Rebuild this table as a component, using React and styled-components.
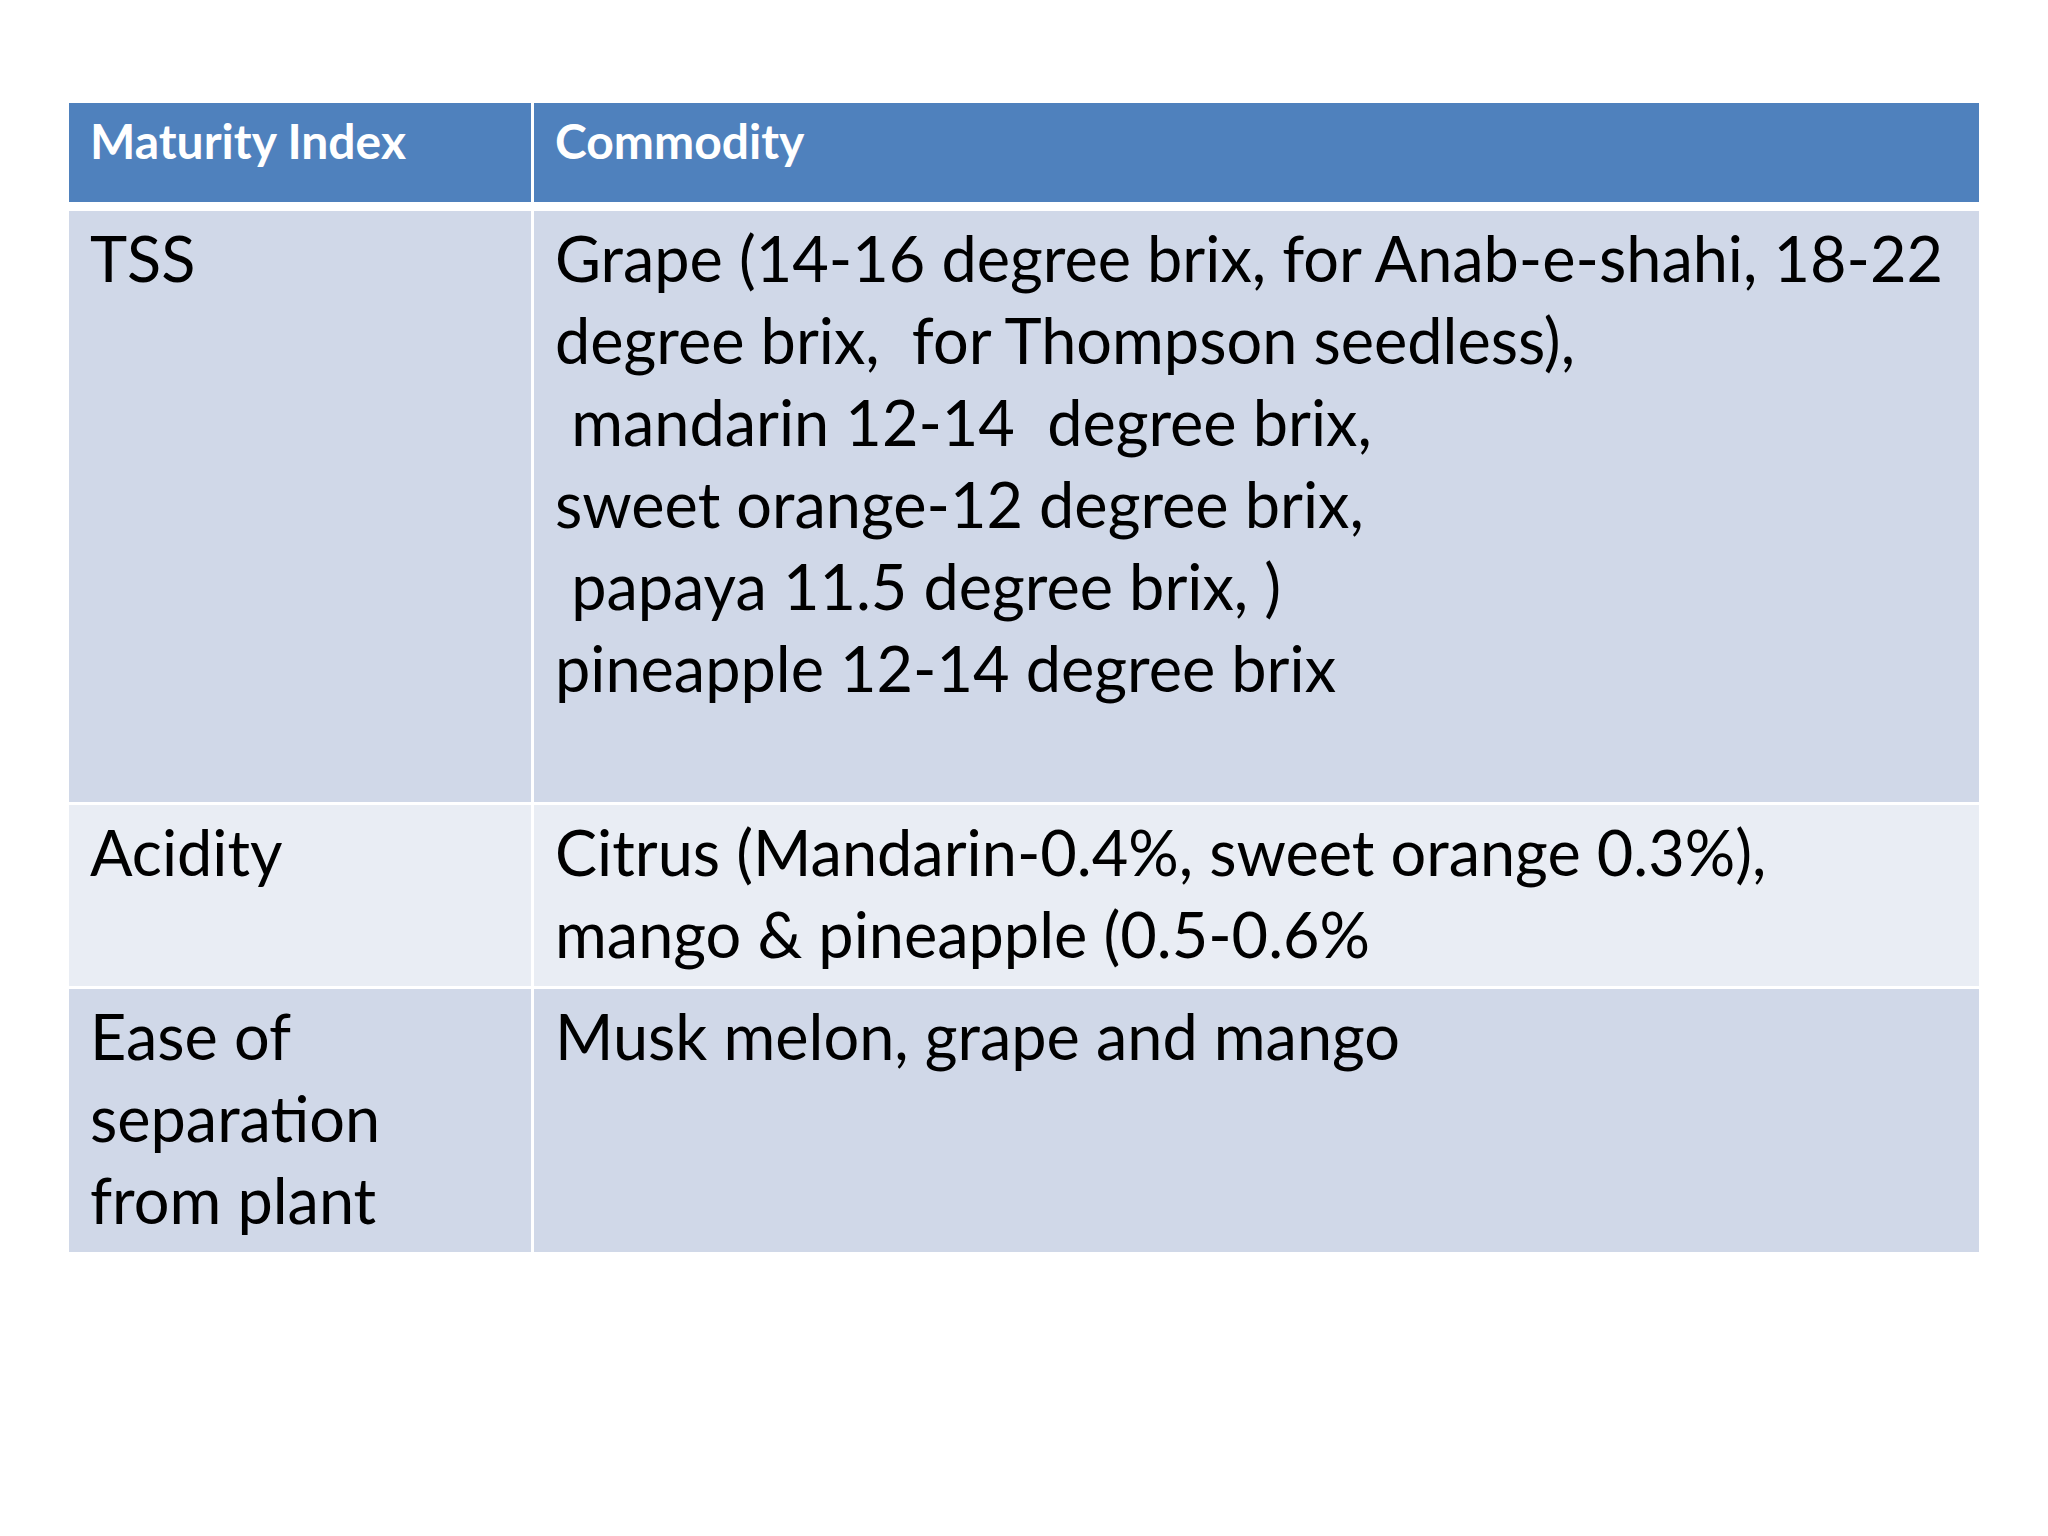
import styled, { createGlobalStyle } from "styled-components";

const rows = [
  {
    index: ["TSS"],
    commodity: [
      "Grape (14-16 degree brix, for Anab-e-shahi, 18-22",
      "degree brix,  for Thompson seedless),",
      " mandarin 12-14  degree brix,",
      "sweet orange-12 degree brix,",
      " papaya 11.5 degree brix, )",
      "pineapple 12-14 degree brix",
      " ",
    ],
    shade: "dark",
  },
  {
    index: ["Acidity"],
    commodity: [
      "Citrus (Mandarin-0.4%, sweet orange 0.3%),",
      "mango & pineapple (0.5-0.6%",
    ],
    shade: "light",
  },
  {
    index: ["Ease of", "separation", "from plant"],
    commodity: ["Musk melon, grape and mango"],
    shade: "dark",
  },
];

const App = () => {
  return (
    <>
      <GlobalStyle />
      <Slide>
        <Table>
          <HeaderRow>
            <HeaderCell>Maturity Index</HeaderCell>
            <HeaderCell>Commodity</HeaderCell>
          </HeaderRow>
          {rows.map((row) => (
            <BodyRow key={row.index[0]}>
              <Cell $shade={row.shade}>
                {row.index.map((line) => (
                  <Line key={line}>{line}</Line>
                ))}
              </Cell>
              <Cell $shade={row.shade}>
                {row.commodity.map((line, i) => (
                  <Line key={i}>{line}</Line>
                ))}
              </Cell>
            </BodyRow>
          ))}
        </Table>
      </Slide>
    </>
  );
};

const GlobalStyle = createGlobalStyle`
  html, body {
    margin: 0;
    padding: 0;
    background: #ffffff;
  }
  body {
    font-family: Lato, "Open Sans", sans-serif;
  }
`;

const Slide = styled.div`
  width: 2048px;
  height: 1536px;
  box-sizing: border-box;
  padding: 103px 69px 0 69px;
  background: #ffffff;
`;

const Table = styled.div`
  display: flex;
  flex-direction: column;
  gap: 3px;
  width: 1910px;
`;

const HeaderRow = styled.div`
  display: grid;
  grid-template-columns: 462px 1445px;
  column-gap: 3px;
  margin-bottom: 6px;
`;

const HeaderCell = styled.div`
  box-sizing: border-box;
  height: 99px;
  padding: 8px 20px 0 21px;
  background: #4f81bd;
  color: #ffffff;
  font-family: Lato, "Open Sans", sans-serif;
  font-weight: 700;
  font-size: 48px;
  line-height: 60px;
`;

const BodyRow = styled.div`
  display: grid;
  grid-template-columns: 462px 1445px;
  column-gap: 3px;
`;

const Cell = styled.div`
  box-sizing: border-box;
  padding: 6px 12px 11px 21px;
  background: ${(p) => (p.$shade === "dark" ? "#d0d8e8" : "#e9edf4")};
  color: #000000;
  font-family: Lato, "Open Sans", sans-serif;
  font-size: 63px;
  line-height: 82px;
`;

const Line = styled.div`
  white-space: pre;
`;

export default App;
